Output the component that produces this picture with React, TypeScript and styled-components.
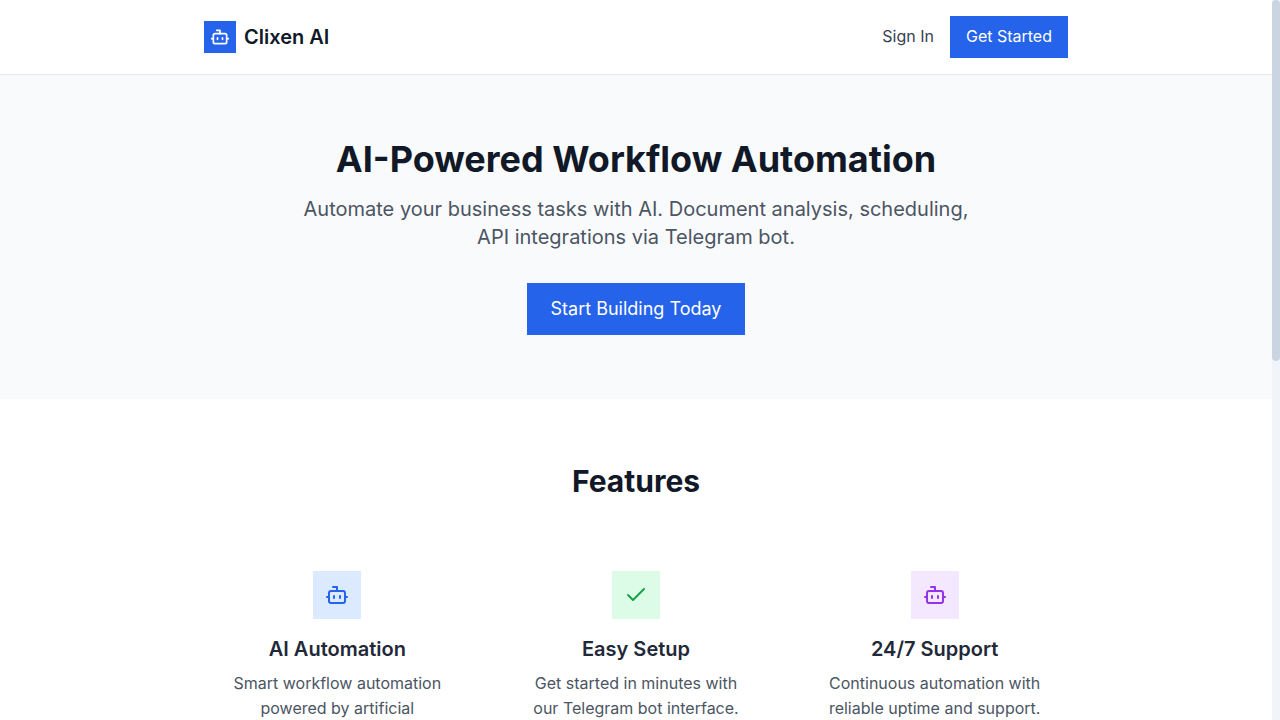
import React from "react";
import styled, { createGlobalStyle } from "styled-components";
import { Bot, Check } from "lucide-react";

const GlobalStyle = createGlobalStyle`
  *, *::before, *::after { box-sizing: border-box; }
  body {
    margin: 0;
    background: #ffffff;
    color: #111827;
    font-family: Inter, "Liberation Sans", sans-serif;
    font-size: 16px;
    line-height: 25px;
  }
  h1, h2, h3, p { margin: 0; }
`;

const Page = styled.div`
  display: flex;
  height: 100vh;
`;

const Content = styled.div`
  flex: 1;
  min-width: 0;
  overflow-y: auto;
  scrollbar-width: none;
`;

const ScrollTrack = styled.div`
  width: 8px;
  background: #f1f5f9;
`;

const ScrollThumb = styled.div`
  height: calc(50% + 1px);
  border-radius: 4px;
  background: #cbd5e1;
`;

const Container = styled.div`
  max-width: 896px;
  margin: 0 auto;
  padding: 0 16px;
`;

const Header = styled.header`
  padding: 16px 0;
  border-bottom: 1px solid #e5e7eb;
`;

const HeaderRow = styled(Container)`
  display: flex;
  align-items: center;
  justify-content: space-between;
`;

const Brand = styled.div`
  display: flex;
  align-items: center;
  gap: 8px;
  font-size: 20px;
  line-height: 28px;
  font-weight: 600;
`;

const BrandMark = styled.span`
  display: flex;
  align-items: center;
  justify-content: center;
  width: 32px;
  height: 32px;
  background: #2563eb;
  color: #ffffff;
`;

const Nav = styled.nav`
  display: flex;
  align-items: baseline;
  gap: 16px;
`;

const NavLink = styled.a`
  color: #374151;
  text-decoration: none;
`;

const Button = styled.button<{ $large?: boolean }>`
  padding: ${(p) => (p.$large ? "12px 24px" : "8px 16px 10px")};
  border: 0;
  background: #2563eb;
  color: #ffffff;
  font-family: inherit;
  font-weight: 400;
  font-size: ${(p) => (p.$large ? "18px" : "16px")};
  line-height: ${(p) => (p.$large ? "28px" : "24px")};
  cursor: pointer;
`;

const Hero = styled.section`
  padding: 64px 0;
  background: #f9fafb;
  text-align: center;
`;

const HeroTitle = styled.h1`
  margin-bottom: 16px;
  font-size: 36px;
  line-height: 40px;
  font-weight: 700;
`;

const HeroText = styled.p`
  max-width: 672px;
  margin: 0 auto 32px;
  color: #4b5563;
  font-size: 20px;
  line-height: 28px;
`;

const Features = styled.section`
  padding: 64px 0;
`;

const SectionTitle = styled.h2`
  margin-bottom: 48px;
  font-size: 30px;
  line-height: 36px;
  font-weight: 700;
  text-align: center;
`;

const FeatureGrid = styled.div`
  display: grid;
  grid-template-columns: repeat(3, 1fr);
  gap: 32px;
`;

const FeatureCard = styled.article`
  padding: 24px;
  text-align: center;
`;

const FeatureIcon = styled.div<{ $bg: string; $fg: string }>`
  display: flex;
  align-items: center;
  justify-content: center;
  width: 48px;
  height: 48px;
  margin: 0 auto 16px;
  background: ${(p) => p.$bg};
  color: ${(p) => p.$fg};
`;

const FeatureTitle = styled.h3`
  margin-bottom: 8px;
  color: #1f2937;
  font-size: 20px;
  line-height: 28px;
  font-weight: 600;
`;

const FeatureText = styled.p`
  color: #4b5563;
`;

const features = [
  { title: "AI Automation", text: "Smart workflow automation powered by artificial intelligence.", Icon: Bot, bg: "#dbeafe", fg: "#2563eb" },
  { title: "Easy Setup", text: "Get started in minutes with our Telegram bot interface.", Icon: Check, bg: "#dcfce7", fg: "#16a34a" },
  { title: "24/7 Support", text: "Continuous automation with reliable uptime and support.", Icon: Bot, bg: "#f3e8ff", fg: "#9333ea" },
];

export default function App() {
  return (
    <Page>
      <GlobalStyle />
      <Content>
        <Header>
          <HeaderRow>
            <Brand>
              <BrandMark><Bot size={20} /></BrandMark>
              <span>Clixen AI</span>
            </Brand>
            <Nav>
              <NavLink href="#signin">Sign In</NavLink>
              <Button type="button">Get Started</Button>
            </Nav>
          </HeaderRow>
        </Header>
        <main>
          <Hero>
            <Container>
              <HeroTitle>AI-Powered Workflow Automation</HeroTitle>
              <HeroText>
                Automate your business tasks with AI. Document analysis, scheduling, API integrations via Telegram bot.
              </HeroText>
              <Button type="button" $large>Start Building Today</Button>
            </Container>
          </Hero>
          <Features>
            <Container>
              <SectionTitle>Features</SectionTitle>
              <FeatureGrid>
                {features.map(({ title, text, Icon, bg, fg }) => (
                  <FeatureCard key={title}>
                    <FeatureIcon $bg={bg} $fg={fg}><Icon size={24} /></FeatureIcon>
                    <FeatureTitle>{title}</FeatureTitle>
                    <FeatureText>{text}</FeatureText>
                  </FeatureCard>
                ))}
              </FeatureGrid>
            </Container>
          </Features>
        </main>
      </Content>
      <ScrollTrack aria-hidden="true">
        <ScrollThumb />
      </ScrollTrack>
    </Page>
  );
}
